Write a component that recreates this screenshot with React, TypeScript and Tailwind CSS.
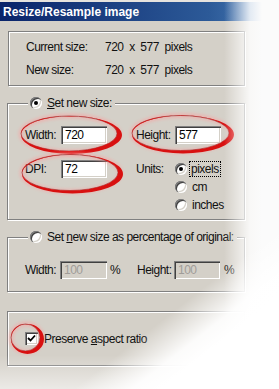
import React from "react";

const ell = (cx: number, cy: number, rx: number, ry: number) =>
  `M ${cx - rx} ${cy} a ${rx} ${ry} 0 1 0 ${2 * rx} 0 a ${rx} ${ry} 0 1 0 ${-2 * rx} 0 Z`;

function Mark({ cx, cy, rx, ry, dx = 3, dy = 2 }: { cx: number; cy: number; rx: number; ry: number; dx?: number; dy?: number }) {
  const outer = ell(cx + dx / 2, cy + dy / 2, rx + dx / 2, ry + dy / 2);
  const inner = ell(cx, cy, rx, ry);
  return (
    <g>
      <ellipse cx={cx + 1} cy={cy + 0.5} rx={rx + 1} ry={ry + 0.5} fill="none" stroke="#ff9a9a" strokeWidth={5} opacity={0.45} filter="url(#glow)" />
      <ellipse cx={cx} cy={cy} rx={rx} ry={ry} fill="none" stroke="#a05050" strokeWidth={1} opacity={0.8} />
      <path d={`${outer} ${inner}`} fillRule="evenodd" fill="#d81010" />
    </g>
  );
}

function Radio({ checked }: { checked?: boolean }) {
  return (
    <span className="flex h-[12px] w-[12px] shrink-0 items-center justify-center rounded-full bg-white shadow-[inset_1px_1px_0_#808080,inset_2px_2px_0_#404040,inset_-1px_-1px_0_#ffffff,inset_-2px_-2px_0_#d4d0c8]">
      {checked && <span className="h-[4px] w-[4px] rounded-full bg-black" />}
    </span>
  );
}

function Field({ value, disabled, w }: { value: string; disabled?: boolean; w: string }) {
  return (
    <div
      className={`${w} flex h-[18px] items-center pl-[4px] shadow-[inset_1px_1px_0_#808080,inset_2px_2px_0_#404040,inset_-1px_-1px_0_#ffffff,inset_-2px_-2px_0_#d4d0c8] ${
        disabled ? "bg-[#d4d0c8] text-[#a09c98]" : "bg-white text-black"
      }`}
    >
      {value}
    </div>
  );
}

export default function App() {
  return (
    <div className="relative h-[389px] w-[279px] overflow-hidden bg-[#d4d0c8] font-['Liberation_Sans',Arial,sans-serif] text-[12px] leading-[16px] tracking-[-0.5px] text-[#111]">
      <div className="h-[2px] bg-[#e6e3de]" />
      <div className="flex h-[19px] items-center bg-[linear-gradient(to_right,#0a246a,#2c5a98_75%,#4f82bc)] pl-[3px] text-[12px] font-bold tracking-normal text-white">
        Resize/Resample image
      </div>

      {/* group 1 */}
      <div className="ml-[8px] mt-[10px] w-[237px] border border-[#808080] px-[17px] pb-[7px] pt-[7px] shadow-[inset_1px_1px_0_#fff,1px_1px_0_#fff]">
        <div className="flex h-[16px] items-center">
          <span className="w-[79px]">Current size:</span>
          <span className="whitespace-pre">720  x  577  pixels</span>
        </div>
        <div className="mt-[7px] flex h-[16px] items-center">
          <span className="w-[79px]">New size:</span>
          <span className="whitespace-pre">720  x  577  pixels</span>
        </div>
      </div>

      {/* group 2 */}
      <div className="relative ml-[7px] mt-[17px] w-[238px] border border-[#808080] pb-[5px] pl-[17px] pt-[22px] shadow-[inset_1px_1px_0_#fff,1px_1px_0_#fff]">
        <div className="absolute -top-[9px] left-[20px] flex h-[16px] items-center bg-[#d4d0c8] px-[2px]">
          <Radio checked />
          <span className="ml-[5px] pr-[1px]">
            <u>S</u>et new size:
          </span>
        </div>
        <div className="flex h-[18px] items-center">
          <span className="w-[36px]">Width:</span>
          <Field value="720" w="w-[46px]" />
          <span className="ml-[29px] w-[39px]">Height:</span>
          <Field value="577" w="w-[46px]" />
        </div>
        <div className="mt-[16px] flex items-start">
          <div className="flex h-[18px] items-center">
            <span className="w-[36px]">DPI:</span>
            <Field value="72" w="w-[46px]" />
            <span className="ml-[29px] w-[39px]">Units:</span>
          </div>
          <div className="flex flex-col">
            <div className="flex h-[18px] items-center">
              <Radio checked />
              <span className="ml-[3px] px-[1px] leading-[14px] outline-1 outline-dotted outline-black">pixels</span>
            </div>
            <div className="flex h-[18px] items-center">
              <Radio />
              <span className="ml-[4px] px-[1px]">cm</span>
            </div>
            <div className="flex h-[18px] items-center">
              <Radio />
              <span className="ml-[4px] px-[1px]">inches</span>
            </div>
          </div>
        </div>
      </div>

      {/* group 3 */}
      <div className="relative ml-[7px] mt-[17px] w-[238px] border border-[#808080] pb-[12px] pl-[17px] pt-[23px] shadow-[inset_1px_1px_0_#fff,1px_1px_0_#fff]">
        <div className="absolute -top-[9px] left-[20px] flex h-[16px] items-center bg-[#d4d0c8] px-[2px]">
          <Radio />
          <span className="ml-[5px] pr-[1px]">
            Set <u>n</u>ew size as percentage of original:
          </span>
        </div>
        <div className="flex h-[18px] items-center">
          <span className="w-[35px]">Width:</span>
          <Field value="100" disabled w="w-[47px]" />
          <span className="ml-[3px] w-[8px]">%</span>
          <span className="ml-[19px] w-[37px]">Height:</span>
          <Field value="100" disabled w="w-[46px]" />
          <span className="ml-[4px]">%</span>
        </div>
      </div>

      {/* group 4 */}
      <div className="ml-[7px] mt-[19px] flex h-[55px] w-[238px] items-center border border-[#808080] pl-[17px] shadow-[inset_1px_1px_0_#fff,1px_1px_0_#fff]">
        <span className="flex h-[13px] w-[13px] items-center justify-center bg-white shadow-[inset_1px_1px_0_#808080,inset_2px_2px_0_#404040,inset_-1px_-1px_0_#ffffff,inset_-2px_-2px_0_#d4d0c8]">
          <svg width="9" height="9" viewBox="0 0 9 9">
            <path d="M1 4 L3.5 6.5 L8 1.5" fill="none" stroke="#000" strokeWidth="1.8" />
          </svg>
        </span>
        <span className="ml-[6px]">
          Preserve <u>a</u>spect ratio
        </span>
      </div>

      {/* red marker circles */}
      <svg className="pointer-events-none absolute left-0 top-0" width="279" height="389" viewBox="0 0 279 389">
        <defs>
          <filter id="glow" x="-20%" y="-40%" width="140%" height="180%">
            <feGaussianBlur stdDeviation="1.6" />
          </filter>
        </defs>
        <Mark cx={69} cy={133.5} rx={48} ry={17.5} dx={5} dy={3} />
        <Mark cx={180.5} cy={133} rx={48.5} ry={17.5} dx={5} dy={3} />
        <Mark cx={70} cy={172.5} rx={48} ry={18} dx={5} dy={3} />
        <Mark cx={25.5} cy={337.5} rx={14.5} ry={13.5} dx={4} dy={3} />
      </svg>

      {/* white fade */}
      <div className="pointer-events-none absolute inset-0 bg-[image:linear-gradient(142deg,rgba(255,255,255,0)_352px,rgba(255,255,255,0.92)_388px,#ffffff_405px),linear-gradient(to_right,rgba(255,255,255,0)_224px,rgba(255,255,255,0.85)_250px,#fbfbfb_262px),linear-gradient(to_bottom,rgba(255,255,255,0)_355px,rgba(255,255,255,0.55)_389px)]" />
    </div>
  );
}
